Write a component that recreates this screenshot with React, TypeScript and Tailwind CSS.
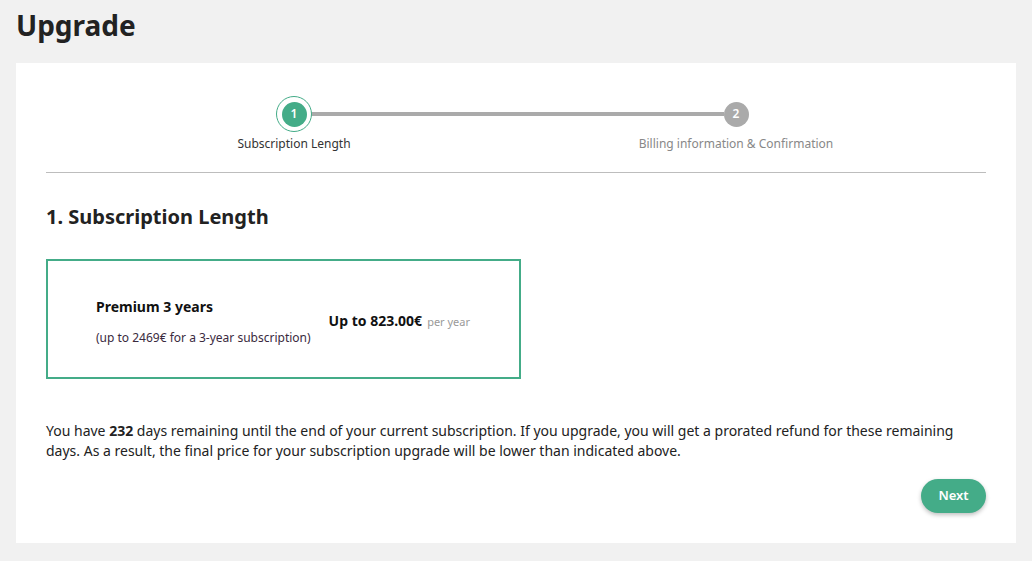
export default function App() {
  return (
    <div className="min-h-[561px] bg-[#f1f1f1] px-4 pb-[18px] font-['Noto_Sans',sans-serif] text-[#222]">
      <h1 className="pt-[5px] text-[28px] font-bold leading-[40px] text-[#222]">Upgrade</h1>

      <div className="mt-[18px] bg-white px-[30px] pt-[33px] pb-[30px]">
        {/* stepper */}
        <div className="relative h-[77px] border-b border-[#bdbdbd]">
          <div className="absolute top-[16px] left-[265px] h-[4px] w-[413px] bg-[#aaaaaa]" />
          <div className="relative flex">
            <div className="ml-[148px] flex w-[200px] flex-col items-center">
              <div className="flex h-[36px] w-[36px] items-center justify-center rounded-full border-[1.5px] border-[#44ac88] bg-white">
                <div className="flex h-[25px] w-[25px] items-center justify-center rounded-full bg-[#44ac88] text-[12px] font-semibold text-white">
                  1
                </div>
              </div>
              <div className="mt-[3px] text-[12px] text-[#333]">Subscription Length</div>
            </div>
            <div className="ml-[212px] flex w-[260px] flex-col items-center">
              <div className="flex h-[36px] w-[36px] items-center justify-center">
                <div className="flex h-[25px] w-[25px] items-center justify-center rounded-full bg-[#aaaaaa] text-[12px] font-semibold text-white">
                  2
                </div>
              </div>
              <div className="mt-[3px] text-[12px] text-[#888]">Billing information &amp; Confirmation</div>
            </div>
          </div>
        </div>

        <h2 className="mt-[29px] text-[20px] font-bold leading-[30px] text-[#222]">1. Subscription Length</h2>

        <div className="mt-[27px] flex h-[120px] w-[475px] items-center border-2 border-[#44ac88] pl-[48px]">
          <div className="mt-[4px] flex flex-col">
            <div className="text-[14px] font-bold text-[#111]">Premium 3 years</div>
            <div className="mt-[12px] text-[12px] text-[#3a2a3e]">(up to 2469€ for a 3-year subscription)</div>
          </div>
          <div className="ml-[18px] mt-[2px] flex items-baseline">
            <span className="text-[14px] font-bold text-[#111]">Up to 823.00€</span>
            <span className="ml-[5px] text-[11px] text-[#999]">per year</span>
          </div>
        </div>

        <p className="mt-[42px] text-[14px] leading-[20px] text-[#222]">
          You have <span className="font-bold">232</span> days remaining until the end of your current subscription. If you upgrade, you will get a prorated refund for these remaining days. As a result, the final price for your subscription upgrade will be lower than indicated above.
        </p>

        <div className="mt-[18px] flex justify-end">
          <button className="h-[34px] w-[65px] rounded-full bg-[#44ac88] text-[13px] font-semibold text-white shadow-[0_2px_4px_rgba(0,0,0,0.25)]">
            Next
          </button>
        </div>
      </div>
    </div>
  );
}
